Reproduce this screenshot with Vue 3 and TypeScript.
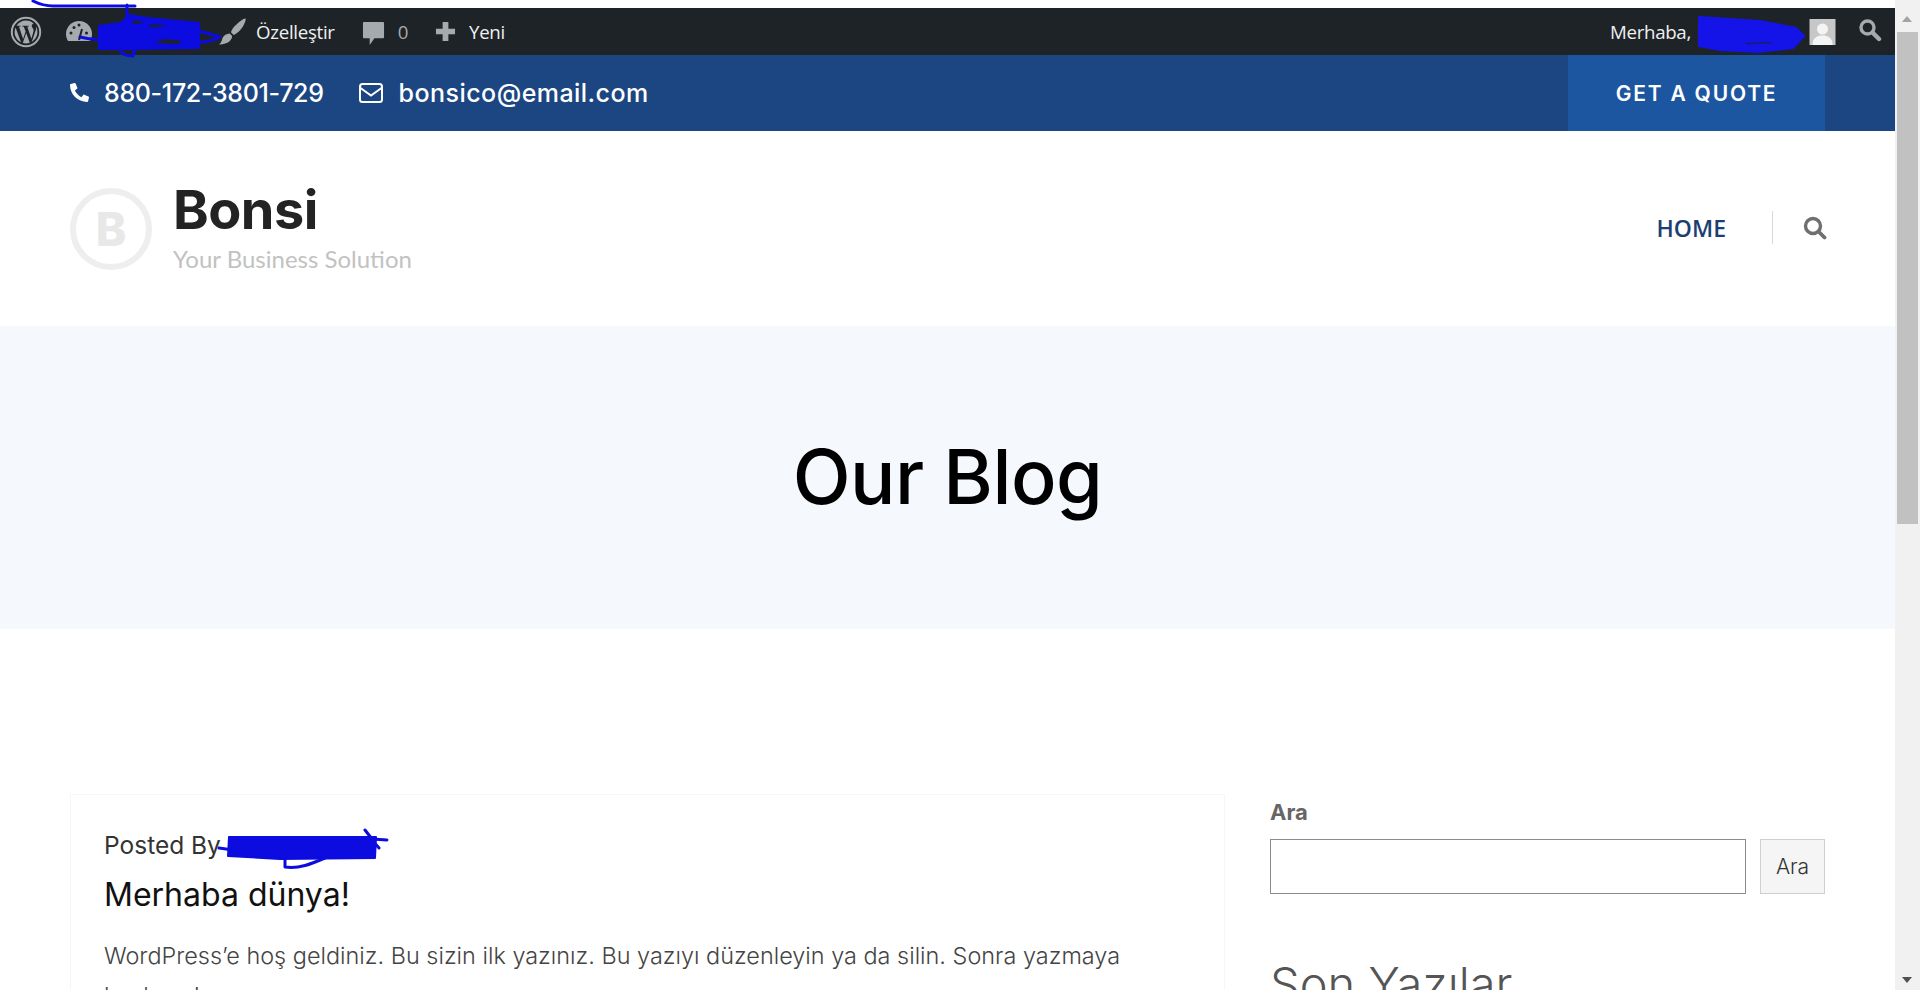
<script setup lang="ts">
const adminLinks = [{ label: 'Özelleştir' }]
</script>

<template>
  <div class="page">
    <div class="main">
      <div class="top-gap"></div>
      <div class="adminbar">
        <div class="admin-left">
          <svg class="ic-wp" viewBox="0 0 32 32"><circle cx="16" cy="16" r="14.2" fill="none" stroke="#a7aaad" stroke-width="2"/><path fill="#a7aaad" d="M4.6 16c0 4.5 2.6 8.4 6.4 10.3L5.6 11.4C5 12.8 4.6 14.4 4.6 16zm19.1-.6c0-1.4-.5-2.4-.9-3.1-.6-.9-1.1-1.7-1.1-2.6 0-1 .8-2 1.9-2h.1C21.700 5.800 19 4.600 16 4.600c-4 0-7.500 2-9.500 5.200h.7c1.200 0 3-.1 3-.1.600 0 .7.800.1.900 0 0-.6.100-1.300.1l4.100 12.200 2.500-7.400-1.800-4.800c-.6 0-1.200-.1-1.200-.1-.6 0-.5-1-.1-.9 0 0 1.900.100 3 .100 1.200 0 3-.1 3-.1.600 0 .7.800.1.900 0 0-.6.100-1.300.1l4.100 12.100 1.100-3.800c.5-1.600.8-2.700.8-3.700zM16.200 17l-3.400 9.900c1 .3 2.100.5 3.200.5 1.300 0 2.600-.2 3.800-.7l-.1-.2L16.200 17zm9.800-6.500c0 .4.100.8.100 1.200 0 1.200-.2 2.500-.9 4.100l-3.500 10.100c3.400-2 5.700-5.700 5.700-9.900 0-2-.5-3.900-1.400-5.500z"/></svg>
          <svg class="ic-dash" viewBox="0 0 28 24"><path fill="#a7aaad" d="M14 1C6.800 1 1 6.800 1 14c0 2.500.7 4.900 2 6.900h22c1.300-2 2-4.400 2-6.900C27 6.800 21.200 1 14 1z"/><path stroke="#1d2327" stroke-width="2" d="M14 20l3-11"/><circle cx="6" cy="13" r="1.500" fill="#1d2327"/><circle cx="9" cy="7.500" r="1.500" fill="#1d2327"/><circle cx="14" cy="5" r="1.500" fill="#1d2327"/><circle cx="21.500" cy="13" r="1.500" fill="#1d2327"/></svg>
          <span class="dash-spacer"></span>
          <svg class="ic-brush" viewBox="0 0 26 26"><path fill="#a7aaad" d="M25.500.5c.8 1-1.400 7.400-5.400 11.600-2 2.100-4.200 3.600-6 4.200l-2.600-2.600c.6-2 2-4.300 4-6.300C19.600 3.300 24.700-.4 25.500.5zM10.300 15l2.300 2.300c.3 3.500-3.500 8.400-12.600 8.200 2.500-1.900 2.700-4.500 3.700-6.800.9-2 3.600-3.500 6.600-3.700z"/></svg>
          <span v-for="l in adminLinks" :key="l.label" class="admin-text customize">{{ l.label }}</span>
          <svg class="ic-comment" viewBox="0 0 24 26"><path fill="#a7aaad" d="M2 1h20c.6 0 1 .4 1 1v15c0 .6-.4 1-1 1h-9l-5 7v-7H2c-.6 0-1-.4-1-1V2c0-.6.400-1 1-1z"/></svg>
          <span class="admin-text count">0</span>
          <svg class="ic-plus" viewBox="0 0 22 22"><path fill="#a7aaad" d="M8 1h6v7h7v6h-7v7H8v-7H1V8h7z"/></svg>
          <span class="admin-text">Yeni</span>
        </div>
        <div class="admin-right">
          <span class="admin-text">Merhaba,</span>
          <span class="name-spacer"></span>
          <svg class="avatar" viewBox="0 0 26 26"><rect width="26" height="26" fill="#c7c7c7"/><circle cx="13" cy="10" r="5.500" fill="#f4f4f4"/><path fill="#f4f4f4" d="M3 26c0-7 4-9.500 10-9.500S23 19 23 26z"/></svg>
          <svg class="ic-search-admin" viewBox="0 0 24 24"><circle cx="9.500" cy="9.500" r="6.500" fill="none" stroke="#a7aaad" stroke-width="3.400"/><path stroke="#a7aaad" stroke-width="4.400" stroke-linecap="round" d="M15 15l6 6"/></svg>
        </div>
      </div>

      <div class="topbar">
        <div class="contact">
          <svg class="ic-phone" viewBox="0 0 512 512"><path fill="#fff" d="M493.400 24.600l-104-24c-11.300-2.600-22.900 3.300-27.500 13.900l-48 112c-4.200 9.800-1.400 21.300 6.900 28l60.600 49.600c-36 76.700-98.900 140.500-177.200 177.200l-49.600-60.600c-6.800-8.300-18.200-11.100-28-6.900l-112 48C3.900 366.500-2 378.100.6 389.400l24 104C27.100 504.200 36.700 512 48 512c256.100 0 464-207.500 464-464 0-11.200-7.700-20.900-18.600-23.400z"/></svg>
          <span class="contact-text phone">880-172-3801-729</span>
          <svg class="ic-mail" viewBox="0 0 24 20"><rect x="1" y="1" width="22" height="18" rx="2.500" fill="none" stroke="#fff" stroke-width="2"/><path d="M1.500 5l10.500 7.500L22.500 5" fill="none" stroke="#fff" stroke-width="2"/></svg>
          <span class="contact-text email">bonsico@email.com</span>
        </div>
        <a class="quote">GET A QUOTE</a>
      </div>

      <header class="header">
        <div class="logo">
          <div class="logo-mark">B</div>
          <div class="logo-words">
            <div class="logo-name">Bonsi</div>
            <div class="logo-tag">Your Business Solution</div>
          </div>
        </div>
        <nav class="nav">
          <a class="nav-home">HOME</a>
          <span class="nav-divider"></span>
          <svg class="ic-search" viewBox="0 0 24 24"><circle cx="10" cy="10" r="7.500" fill="none" stroke="#6f6f6f" stroke-width="3.400"/><path stroke="#6f6f6f" stroke-width="3.800" stroke-linecap="round" d="M16 16l5.500 5.500"/></svg>
        </nav>
      </header>

      <section class="banner"><h1>Our Blog</h1></section>

      <section class="content">
        <article class="post">
          <div class="posted">Posted By</div>
          <h2>Merhaba dünya!</h2>
          <p>WordPress’e hoş geldiniz. Bu sizin ilk yazınız. Bu yazıyı düzenleyin ya da silin. Sonra yazmaya başlayın!</p>
        </article>
        <aside class="sidebar">
          <label class="search-label">Ara</label>
          <div class="search-row">
            <div class="search-input"></div>
            <div class="search-btn">Ara</div>
          </div>
          <h3>Son Yazılar</h3>
        </aside>
      </section>
    </div>

    <div class="scrollbar">
      <div class="arrow up"></div>
      <div class="thumb"></div>
      <div class="arrow down"></div>
    </div>

    <svg class="scribbles" viewBox="0 0 1920 990" fill="none" stroke="#0c0ce0" stroke-linecap="round" stroke-linejoin="round">
      <path stroke-width="3" d="M33 1c6 3 12 5 20 5h82M127 5v16"/>
      <path fill="#0c0ce0" fill-rule="evenodd" stroke-width="2" d="M99 26l22-3 8-8 18 3 52 5v25l-70 1h-30zM133 19l-2 5 10 1 3-4zM148 28l2-5 10 1 14 1-14 3zM150 44l14-6 18 2-2 5z"/>
      <path stroke-width="3" d="M80 37c12 3 24 3 30 0M195 30c8 2 16 4 25 7-6 4-16 5-25 6M120 50c2 5 8 6 13 6l2-7"/>
      <path fill="#1414e8" fill-rule="evenodd" stroke="#1414e8" stroke-width="2" d="M1699 17l61 4 36 7 8 8-11 12-35 4-38-2-21-4zM1745 42l26-1 2 3-28 1z"/>
      <path fill="#0c0ce0" stroke-width="2" d="M229 837h147l-1 21-95 1-52-3z"/>
      <path stroke-width="3" d="M219 848l14 2M285 859v8c14 2 26-3 40-9M365 830l7 9 15 1M372 840l7 8M375 846l-8 8"/>
    </svg>
  </div>
</template>

<style>
html, body { margin: 0; height: 990px; overflow: hidden; background: #fff; }
</style>

<style scoped>
.page { display: flex; position: relative; width: 1920px; height: 990px; overflow: hidden; font-family: Inter, "Liberation Sans", sans-serif; }
.main { width: 1895px; flex: none; height: 990px; overflow: hidden; background: #fff; }
.top-gap { height: 8px; }

.adminbar { height: 47px; background: #1d2327; display: flex; justify-content: space-between; align-items: center; }
.admin-left, .admin-right { display: flex; align-items: center; }
.admin-text { font-family: "Open Sans", sans-serif; font-size: 18.700px; color: #f0f0f1; letter-spacing: -0.300px; }
.ic-wp { width: 32px; height: 32px; margin-left: 10px; }
.ic-dash { width: 28px; height: 24px; margin-left: 23px; }
.dash-spacer { width: 126px; }
.ic-brush { width: 27px; height: 27px; }
.customize { margin-left: 10px; }
.ic-comment { width: 23px; height: 25px; margin-left: 27px; margin-top: 3px; }
.count { margin-left: 13px; color: #a7aaad; }
.ic-plus { width: 21px; height: 21px; margin-left: 27px; margin-right: 13px; }
.name-spacer { width: 118px; }
.avatar { width: 27px; height: 26px; margin-right: 22px; }
.ic-search-admin { width: 24px; height: 24px; margin-right: 13px; margin-top: -3px; }

.topbar { height: 76px; background: #1c4682; display: flex; justify-content: space-between; padding: 0 70px; }
.contact { display: flex; align-items: center; }
.contact-text { font-size: 25px; font-weight: 500; color: #fff; letter-spacing: -0.330px; }
.email { letter-spacing: 0.450px; }
.phone { margin-left: 15px; }
.ic-phone { width: 19px; height: 19px; margin-top: -2px; transform: scaleX(-1); }
.ic-mail { width: 24px; height: 20px; margin: 0 16px 0 35px; }
.quote { width: 257px; background: #1c56a0; color: #fff; display: flex; align-items: center; justify-content: center; font-size: 21px; font-weight: 600; letter-spacing: 1.800px; }

.header { height: 195px; box-sizing: border-box; display: flex; justify-content: space-between; align-items: center; padding: 0 68px 2px 70px; }
.logo { display: flex; align-items: center; }
.logo-mark { width: 70px; height: 70px; border: 6px solid #eeeeee; border-radius: 50%; display: flex; align-items: center; justify-content: center; color: #e8e8e8; font-size: 46px; font-weight: 800; margin-top: 2px; }
.logo-words { margin-left: 21px; }
.logo-name { font-size: 54px; line-height: 58px; font-weight: 700; color: #232323; letter-spacing: -0.500px; }
.logo-tag { font-family: Lato, sans-serif; font-size: 24px; line-height: 30px; color: #c2c2c2; margin-top: 5px; }
.nav { display: flex; align-items: center; }
.nav-home { font-family: "Open Sans", sans-serif; font-size: 23px; font-weight: 600; color: #1c3f72; }
.nav-divider { width: 1px; height: 33px; background: #d8d8d8; margin: 0 30px 0 46px; }
.ic-search { width: 24px; height: 24px; }

.banner { height: 303px; background: #f5f8fc; display: flex; align-items: center; justify-content: center; }
.banner h1 { margin: 0; font-size: 75.500px; font-weight: 500; color: #000; letter-spacing: -0.500px; padding-bottom: 3px; }

.content { display: flex; padding: 165px 70px 0; gap: 45px; }
.post { width: 1155px; height: 300px; flex: none; border: 1px solid #f6f6f6; box-sizing: border-box; padding: 33px 33px; }
.posted { font-size: 24.500px; line-height: 34px; color: #333; }
.post h2 { margin: 12px 0 0; font-size: 32px; line-height: 42px; font-weight: 400; color: #111; }
.post p { margin: 20px 0 0; font-size: 23.450px; line-height: 40px; color: #444; font-weight: 300; width: 1030px; }
.sidebar { width: 555px; flex: none; }
.search-label { display: block; font-size: 22px; line-height: 28px; font-weight: 700; color: #666; margin-top: 4px; }
.search-row { display: flex; gap: 14px; margin-top: 13px; }
.search-input { width: 476px; height: 55px; border: 1px solid #8c8c8c; box-sizing: border-box; }
.search-btn { width: 65px; height: 55px; box-sizing: border-box; border: 1px solid #cfcfcf; background: #f5f5f5; display: flex; align-items: center; justify-content: center; font-size: 21px; font-weight: 300; color: #333; }
.sidebar h3 { margin: 62px 0 0; font-size: 47px; line-height: 56px; font-weight: 300; color: #555; }

.scrollbar { width: 25px; height: 990px; background: #f1f1f1; position: relative; padding-left: 2px; box-sizing: border-box; }
.thumb { width: 21px; height: 492px; background: #c1c1c1; position: absolute; top: 32px; left: 2px; }
.arrow { position: absolute; left: 7px; width: 0; height: 0; border-left: 5.500px solid transparent; border-right: 5.500px solid transparent; }
.arrow.up { top: 16px; border-bottom: 6px solid #a3a3a3; }
.arrow.down { bottom: 7px; border-top: 6px solid #505050; }

.scribbles { position: absolute; left: 0; top: 0; width: 1920px; height: 990px; pointer-events: none; }
</style>
